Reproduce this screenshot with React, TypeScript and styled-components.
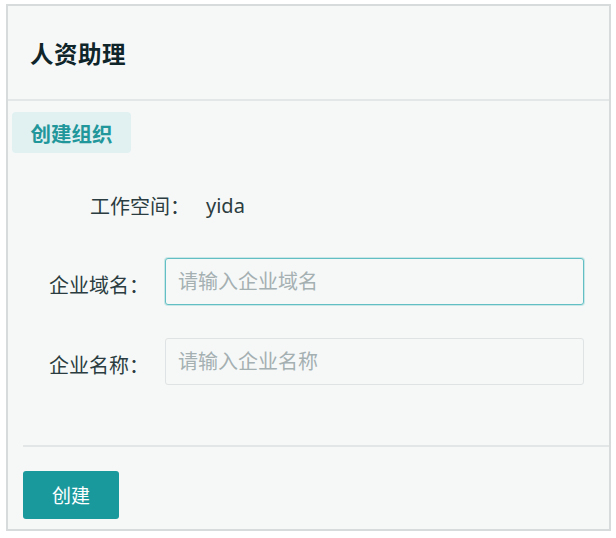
import React from "react";
import styled, { createGlobalStyle } from "styled-components";

const Global = createGlobalStyle`
  html, body { margin: 0; padding: 0; background: #ffffff; }
  body { font-family: "Noto Sans", "Noto Sans CJK SC", sans-serif; }
  * { box-sizing: border-box; }
`;

const Frame = styled.div`
  margin: 4px 5px 0 6px;
  height: 527px;
  border: 2px solid #d8dbdb;
  background: #f6f8f8;
  display: flex;
  flex-direction: column;
`;

const Header = styled.header`
  height: 95px;
  flex: none;
  display: flex;
  align-items: center;
  padding-left: 22px;
  border-bottom: 2px solid #e3e7e7;
`;

const Title = styled.h1`
  margin: 0;
  font-size: 23.5px;
  font-weight: 700;
  color: #0f2529;
  letter-spacing: 0.5px;
`;

const TabBar = styled.div`
  display: flex;
  padding: 11px 0 0 4px;
`;

const Tab = styled.div`
  width: 119px;
  height: 41px;
  border-radius: 4px;
  background: #e1f0f1;
  color: #21979b;
  font-size: 20.5px;
  font-weight: 700;
  display: flex;
  align-items: center;
  justify-content: center;
`;

const Body = styled.div`
  flex: 1;
  padding: 0 25px 0 15px;
  display: flex;
  flex-direction: column;
`;

const InfoRow = styled.div`
  display: flex;
  align-items: center;
  gap: 16px;
  padding-left: 67px;
  margin-top: 36px;
  height: 32px;
  font-size: 20px;
  color: #2b3d40;
`;

const Form = styled.div`
  display: grid;
  grid-template-columns: 126px 1fr;
  column-gap: 16px;
  row-gap: 33px;
  margin-top: 37px;
`;

const Label = styled.label`
  font-size: 20px;
  color: #2b3d40;
  text-align: right;
  padding-top: 9px;
  line-height: 38px;
`;

const Input = styled.input<{ $focused?: boolean }>`
  height: 47px;
  width: 100%;
  border: 1.5px solid ${(p) => (p.$focused ? "#62bfc3" : "#dfe3e3")};
  border-radius: 3px;
  background: #f6f8f8;
  padding: 0 12px;
  font-family: "Noto Sans", "Noto Sans CJK SC", sans-serif;
  font-size: 20px;
  color: #2b3d40;
  outline: none;
  box-shadow: ${(p) => (p.$focused ? "0 0 0 1px rgba(98,191,195,0.3)" : "none")};
  &::placeholder { color: #a5b0b2; }
`;

const Footer = styled.div`
  margin-top: auto;
  padding-left: 15px;
  display: flex;
  flex-direction: column;
`;

const Divider = styled.div`
  height: 2px;
  background: #e2e6e6;
`;

const ButtonRow = styled.div`
  padding: 24px 0 10px;
  display: flex;
`;

const Button = styled.button`
  width: 96px;
  height: 48px;
  border: none;
  border-radius: 3px;
  background: #1a999d;
  color: #ffffff;
  font-family: "Noto Sans", "Noto Sans CJK SC", sans-serif;
  font-size: 19px;
  cursor: pointer;
`;

export default function App() {
  return (
    <>
      <Global />
      <Frame>
        <Header>
          <Title>人资助理</Title>
        </Header>
        <TabBar>
          <Tab>创建组织</Tab>
        </TabBar>
        <Body>
          <InfoRow>
            <span>工作空间：</span>
            <span>yida</span>
          </InfoRow>
          <Form>
            <Label>企业域名：</Label>
            <Input $focused placeholder="请输入企业域名" />
            <Label>企业名称：</Label>
            <Input placeholder="请输入企业名称" />
          </Form>
        </Body>
        <Footer>
          <Divider />
          <ButtonRow>
            <Button>创建</Button>
          </ButtonRow>
        </Footer>
      </Frame>
    </>
  );
}
